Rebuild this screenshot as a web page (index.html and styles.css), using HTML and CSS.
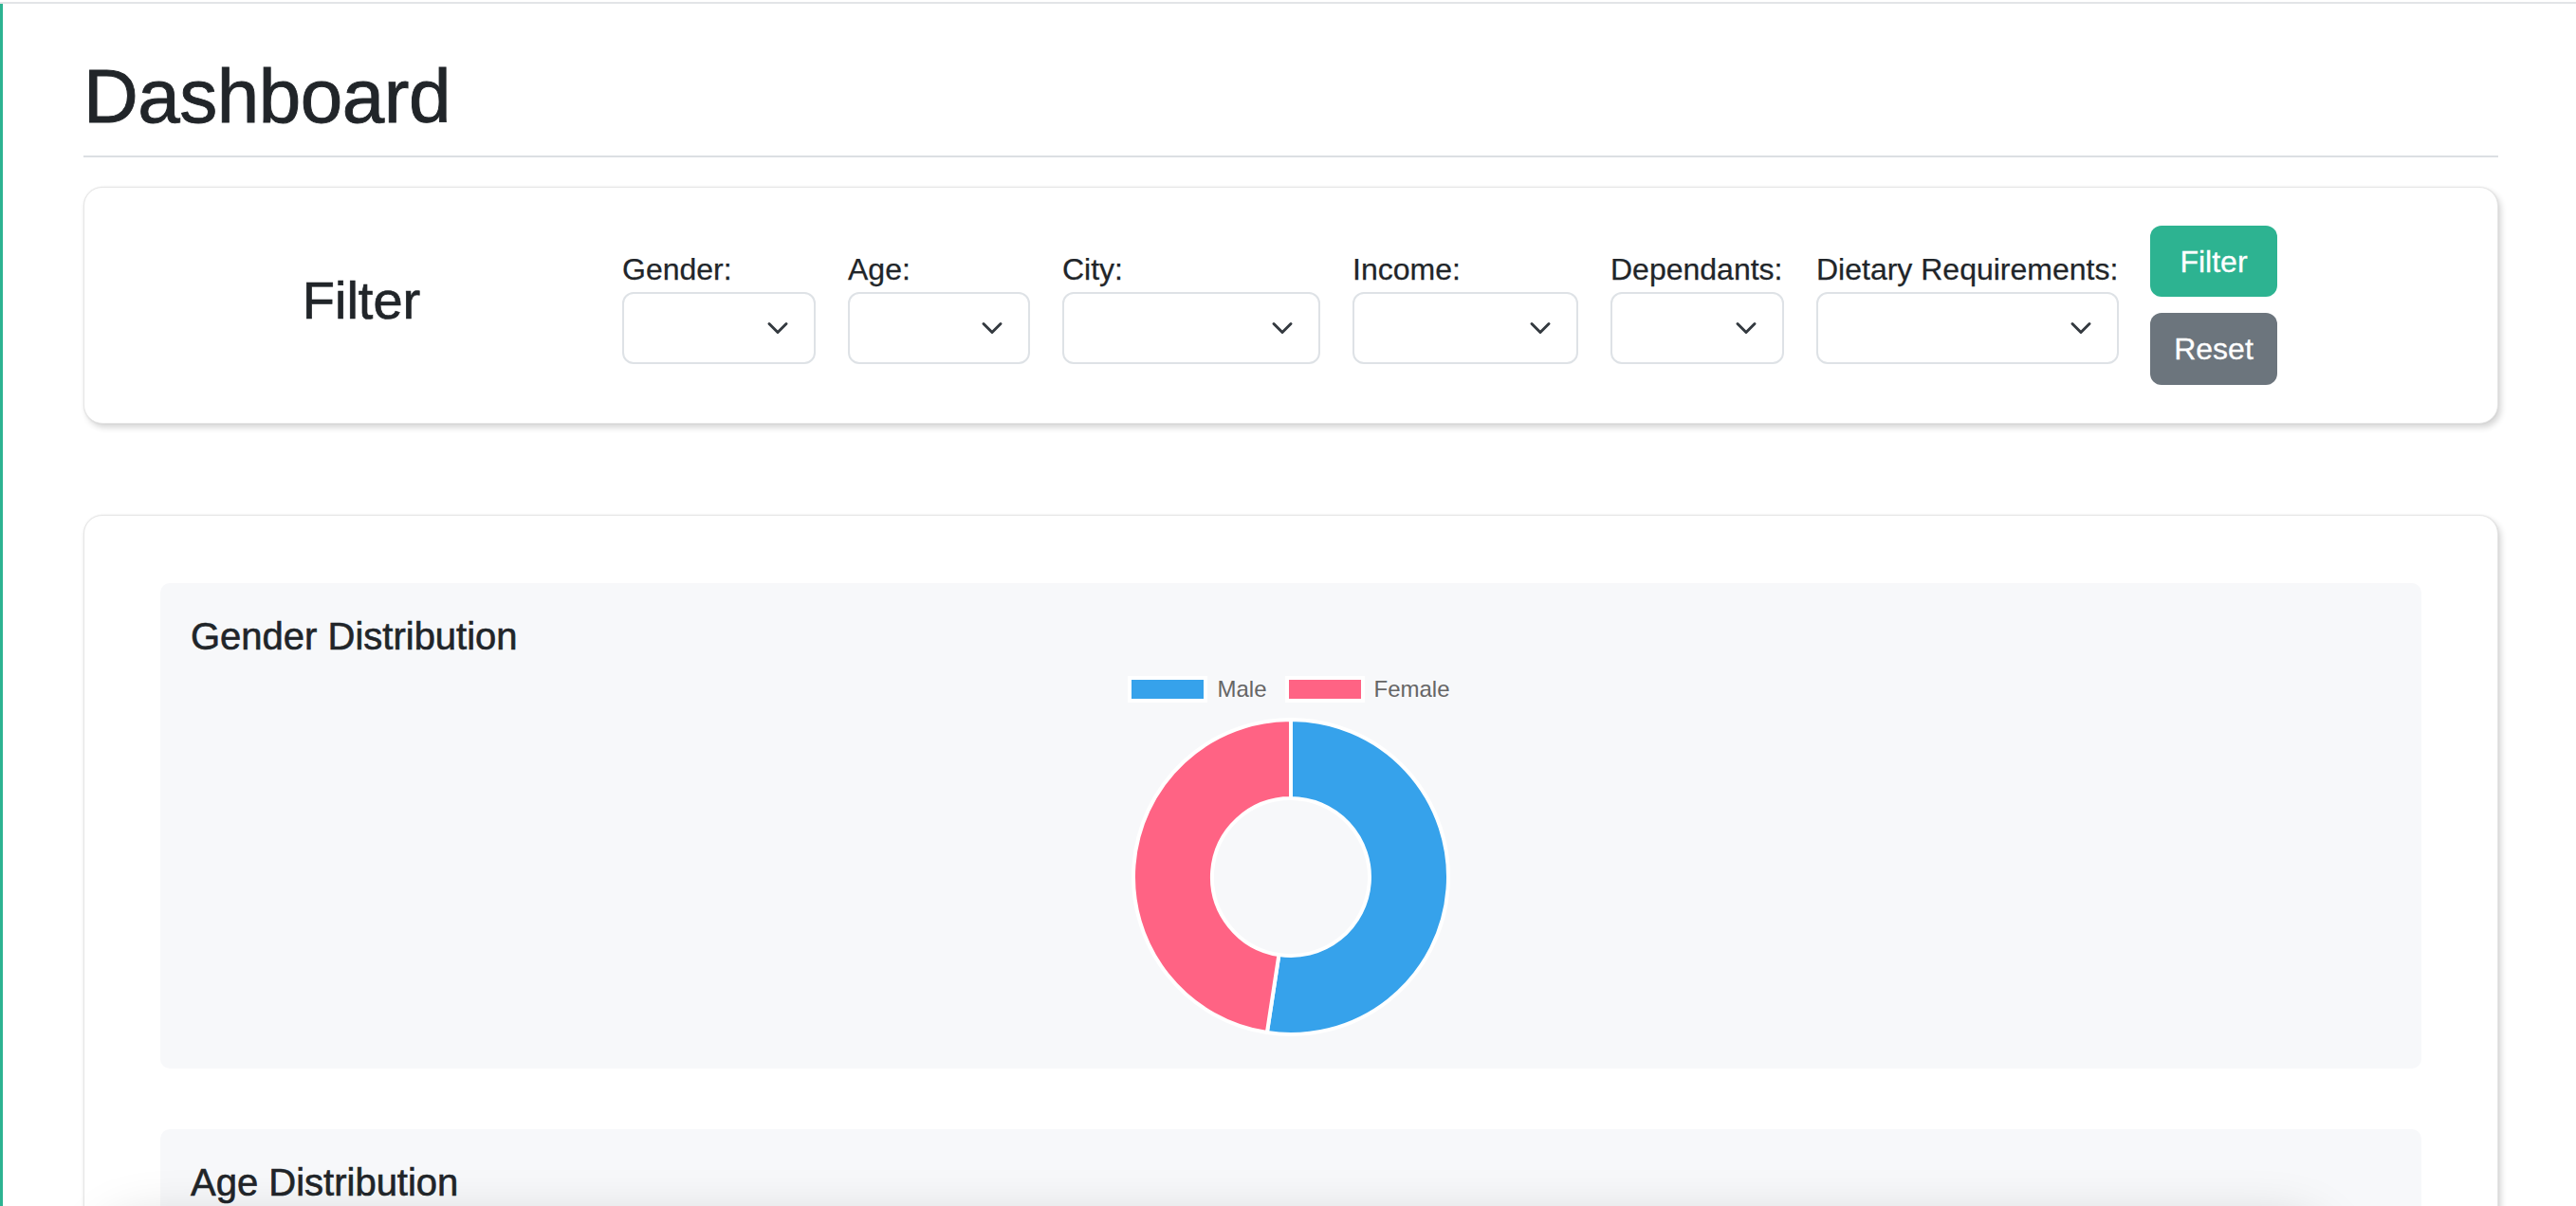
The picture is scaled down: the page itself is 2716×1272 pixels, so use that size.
FILE: index.html
```html
<!DOCTYPE html>
<html lang="en">
<head>
<meta charset="utf-8">
<title>Dashboard</title>
<link rel="stylesheet" href="styles.css">
</head>
<body>
<div class="topline"></div>
<main class="main">
  <header class="page-header">
    <h1 class="page-title">Dashboard</h1>
  </header>
  <hr class="divider">

  <section class="card filter-card">
    <div class="filter-heading-col">
      <h3 class="filter-heading">Filter</h3>
    </div>
    <form class="filter-form">
      <div class="field">
        <label class="field-label" for="gender">Gender:</label>
        <div class="select-wrap w-gender">
          <select id="gender" class="select"><option></option></select>
          <svg class="chevron" viewBox="0 0 16 16" width="24" height="24"><path d="m2 5 6 6 6-6" fill="none" stroke="#343a40" stroke-width="2" stroke-linecap="round" stroke-linejoin="round"/></svg>
        </div>
      </div>
      <div class="field">
        <label class="field-label" for="age">Age:</label>
        <div class="select-wrap w-age">
          <select id="age" class="select"><option></option></select>
          <svg class="chevron" viewBox="0 0 16 16" width="24" height="24"><path d="m2 5 6 6 6-6" fill="none" stroke="#343a40" stroke-width="2" stroke-linecap="round" stroke-linejoin="round"/></svg>
        </div>
      </div>
      <div class="field">
        <label class="field-label" for="city">City:</label>
        <div class="select-wrap w-city">
          <select id="city" class="select"><option></option></select>
          <svg class="chevron" viewBox="0 0 16 16" width="24" height="24"><path d="m2 5 6 6 6-6" fill="none" stroke="#343a40" stroke-width="2" stroke-linecap="round" stroke-linejoin="round"/></svg>
        </div>
      </div>
      <div class="field">
        <label class="field-label" for="income">Income:</label>
        <div class="select-wrap w-income">
          <select id="income" class="select"><option></option></select>
          <svg class="chevron" viewBox="0 0 16 16" width="24" height="24"><path d="m2 5 6 6 6-6" fill="none" stroke="#343a40" stroke-width="2" stroke-linecap="round" stroke-linejoin="round"/></svg>
        </div>
      </div>
      <div class="field">
        <label class="field-label" for="dependants">Dependants:</label>
        <div class="select-wrap w-dependants">
          <select id="dependants" class="select"><option></option></select>
          <svg class="chevron" viewBox="0 0 16 16" width="24" height="24"><path d="m2 5 6 6 6-6" fill="none" stroke="#343a40" stroke-width="2" stroke-linecap="round" stroke-linejoin="round"/></svg>
        </div>
      </div>
      <div class="field">
        <label class="field-label" for="dietary">Dietary Requirements:</label>
        <div class="select-wrap w-dietary">
          <select id="dietary" class="select"><option></option></select>
          <svg class="chevron" viewBox="0 0 16 16" width="24" height="24"><path d="m2 5 6 6 6-6" fill="none" stroke="#343a40" stroke-width="2" stroke-linecap="round" stroke-linejoin="round"/></svg>
        </div>
      </div>
      <div class="buttons">
        <button type="button" class="btn btn-filter">Filter</button>
        <button type="button" class="btn btn-reset">Reset</button>
      </div>
    </form>
  </section>

  <section class="card charts-card">
    <div class="panel">
      <h5 class="panel-title">Gender Distribution</h5>
      <div class="legend">
        <span class="legend-item"><span class="legend-box male"></span><span class="legend-text">Male</span></span>
        <span class="legend-item"><span class="legend-box female"></span><span class="legend-text">Female</span></span>
      </div>
      <svg class="donut" width="340" height="340" viewBox="0 0 340 340">
        <path d="M170 4 A166 166 0 1 1 144.89 334.09 L157.44 252.05 A83 83 0 1 0 170 87 Z" fill="#36a2eb" stroke="#fff" stroke-width="4" stroke-linejoin="bevel"/>
        <path d="M144.89 334.09 A166 166 0 0 1 170 4 L170 87 A83 83 0 0 0 157.44 252.05 Z" fill="#ff6384" stroke="#fff" stroke-width="4" stroke-linejoin="bevel"/>
      </svg>
    </div>
    <div class="panel panel-age">
      <h5 class="panel-title">Age Distribution</h5>
    </div>
  </section>
</main>
<div class="bottom-glow"></div>
</body>
</html>
```

FILE: styles.css
```css
* { box-sizing: border-box; }

html, body {
  margin: 0;
  padding: 0;
  background: #ffffff;
}

body {
  font-family: "Liberation Sans", Arial, Helvetica, sans-serif;
  color: #212529;
  padding-top: 2px;
}

.topline {
  height: 2px;
  background: #e2e4e7;
}

.main {
  border-left: 3px solid #2db391;
  padding: 0 82px 0 85px;
  min-height: 1300px;
}

.page-header {
  padding-top: 50px;
}

.page-title {
  margin: 0;
  font-size: 80px;
  line-height: 96px;
  font-weight: 400;
  letter-spacing: -0.5px;
  color: #212529;
  -webkit-text-stroke: 0.9px #212529;
}

.divider {
  margin: 14px 0 0 0;
  border: 0;
  border-top: 2px solid #dcdfe3;
  height: 0;
}

.card {
  background: #fff;
  border: 1px solid #e6e6e6;
  border-radius: 20px;
  box-shadow: 3px 4px 6px rgba(0, 0, 0, 0.16), 0 0 2px rgba(0, 0, 0, 0.08);
}

.filter-card {
  margin-top: 31px;
  display: flex;
  align-items: center;
  padding: 40px 32px;
}

.filter-heading-col {
  width: 520px;
  margin-right: 15px;
  text-align: center;
}

.filter-heading {
  margin: 0 0 12px 0;
  font-size: 56px;
  line-height: 67px;
  font-weight: 400;
  -webkit-text-stroke: 0.7px #212529;
}

.filter-form {
  display: flex;
  align-items: center;
  gap: 34px;
}

.field {
  display: flex;
  flex-direction: column;
}

.field-label {
  font-size: 32px;
  line-height: 48px;
  color: #212529;
  white-space: nowrap;
  -webkit-text-stroke: 0.25px #212529;
}

.select-wrap {
  position: relative;
  height: 76px;
}

.w-gender { width: 204px; }
.w-age { width: 192px; }
.w-city { width: 272px; }
.w-income { width: 238px; }
.w-dependants { width: 183px; }
.w-dietary { width: 319px; }

.select {
  -webkit-appearance: none;
  appearance: none;
  width: 100%;
  height: 100%;
  border: 2px solid #dee2e6;
  border-radius: 12px;
  background: #fff;
  font-family: inherit;
  font-size: 32px;
  padding: 0 70px 0 24px;
  color: #212529;
  display: block;
}

.chevron {
  position: absolute;
  right: 28px;
  top: 50%;
  transform: translateY(-50%);
  pointer-events: none;
}

.buttons {
  display: flex;
  flex-direction: column;
  gap: 17px;
  margin-left: -1px;
}

.btn {
  width: 134px;
  height: 76px;
  border: 0;
  border-radius: 12px;
  color: #fff;
  font-family: inherit;
  font-size: 32px;
  line-height: 48px;
  padding: 0;
  cursor: pointer;
  -webkit-text-stroke: 0.3px #ffffff;
}

.btn-filter {
  background: #2db391;
  height: 75px;
}

.btn-reset {
  background: #6c757d;
}

.charts-card {
  margin-top: 96px;
  padding: 71px 80px 80px 80px;
}

.panel {
  background: #f7f8fa;
  border-radius: 10px;
  padding: 32px;
  display: flex;
  flex-direction: column;
  align-items: center;
}

.panel + .panel {
  margin-top: 64px;
}

.panel-title {
  align-self: stretch;
  margin: 0 0 16px 0;
  font-size: 40px;
  line-height: 48px;
  font-weight: 400;
  color: #212529;
  -webkit-text-stroke: 0.6px #212529;
}

.panel-age {
  min-height: 700px;
}

.legend {
  display: flex;
  justify-content: center;
  align-items: center;
  gap: 23px;
  height: 32px;
}

.legend-item {
  display: flex;
  align-items: center;
}

.legend-box {
  width: 76px;
  height: 20px;
  margin-right: 14px;
  box-shadow: 0 0 0 4px #ffffff;
}

.legend-box.male { background: #36a2eb; }
.legend-box.female { background: #ff6384; }

.legend-text {
  font-size: 24px;
  line-height: 32px;
  color: #666666;
}

.donut {
  display: block;
  margin-top: 12px;
}

.bottom-glow {
  position: fixed;
  left: 110px;
  width: 2340px;
  top: calc(100vh + 20px);
  height: 100px;
  border-radius: 40px;
  background: #fff;
  box-shadow: 0 0 60px 0 rgba(0, 0, 0, 0.2);
}
```
